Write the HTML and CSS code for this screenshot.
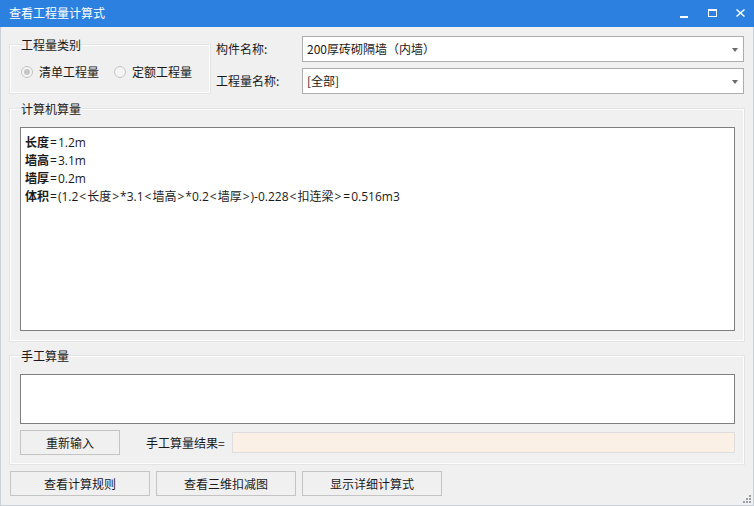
FILE: index.html
```html
<!DOCTYPE html>
<html lang="zh-CN">
<head>
<meta charset="utf-8">
<title>查看工程量计算式</title>
<link rel="stylesheet" href="styles.css">
</head>
<body>
<div class="window">
  <div class="titlebar">
    <span class="title">查看工程量计算式</span>
    <div class="controls">
      <span class="ctl ctl-min"></span>
      <span class="ctl ctl-max"></span>
      <svg class="ctl ctl-close" width="9" height="8" viewBox="0 0 9 8"><path d="M0.5 0.5 L8.5 7.5 M8.5 0.5 L0.5 7.5" stroke="#fff" stroke-width="1.4" fill="none"/></svg>
    </div>
  </div>
  <div class="body">
    <div class="top-row">
      <fieldset class="group group-type">
        <legend>工程量类别</legend>
        <div class="radios">
          <label class="radio"><span class="dot checked"></span>清单工程量</label>
          <label class="radio"><span class="dot"></span>定额工程量</label>
        </div>
      </fieldset>
      <div class="fields">
        <span class="flabel">构件名称:</span>
        <div class="combo"><span>200厚砖砌隔墙（内墙）</span><i class="arrow"></i></div>
        <span class="flabel">工程量名称:</span>
        <div class="combo"><span>[全部]</span><i class="arrow"></i></div>
      </div>
    </div>

    <fieldset class="group group-auto">
      <legend>计算机算量</legend>
      <div class="textbox big">
        <div><b>长度</b><span class="op">=</span>1.2m</div>
        <div><b>墙高</b><span class="op">=</span>3.1m</div>
        <div><b>墙厚</b><span class="op">=</span>0.2m</div>
        <div><b>体积</b><span class="op">=</span>(1.2<span class="op">&lt;</span>长度<span class="op">&gt;</span>*3.1<span class="op">&lt;</span>墙高<span class="op">&gt;</span>*0.2<span class="op">&lt;</span>墙厚<span class="op">&gt;</span>)-0.228<span class="op">&lt;</span>扣连梁<span class="op">&gt;</span><span class="op">=</span>0.516m3</div>
      </div>
    </fieldset>

    <fieldset class="group group-manual">
      <legend>手工算量</legend>
      <div class="textbox small"></div>
      <div class="manual-row">
        <button class="btn btn-reset">重新输入</button>
        <span class="result-label">手工算量结果=</span>
        <div class="result"></div>
      </div>
    </fieldset>

    <div class="bottom-row">
      <button class="btn btn-wide">查看计算规则</button>
      <button class="btn btn-wide">查看三维扣减图</button>
      <button class="btn btn-wide">显示详细计算式</button>
    </div>

    <svg class="grip" width="9" height="9" viewBox="0 0 9 9">
      <rect x="7" y="1" width="2" height="2" fill="#9aa0a8"/>
      <rect x="4" y="4" width="2" height="2" fill="#9aa0a8"/>
      <rect x="7" y="4" width="2" height="2" fill="#9aa0a8"/>
      <rect x="1" y="7" width="2" height="2" fill="#9aa0a8"/>
      <rect x="4" y="7" width="2" height="2" fill="#9aa0a8"/>
      <rect x="7" y="7" width="2" height="2" fill="#9aa0a8"/>
    </svg>
  </div>
</div>
</body>
</html>
```

FILE: styles.css
```css
* { box-sizing: border-box; }
html, body { margin: 0; padding: 0; }
body {
  width: 754px;
  height: 506px;
  overflow: hidden;
  background: #f0f0f0;
  font-family: "Noto Sans CJK SC", "Noto Sans", sans-serif;
  font-size: 12px;
  color: #1a1a1a;
}
.window {
  width: 754px;
  height: 506px;
  display: flex;
  flex-direction: column;
}
.titlebar {
  height: 27px;
  flex: none;
  background: #2b80e0;
  display: flex;
  align-items: center;
  justify-content: space-between;
  padding-left: 9px;
}
.title {
  color: #fff;
  font-size: 12px;
  line-height: 16px;
  margin-top: -1px;
}
.controls {
  display: flex;
  align-items: center;
  height: 100%;
}
.ctl { display: block; }
.ctl-min {
  width: 8px;
  height: 2px;
  background: #fff;
  margin: 7px 20px 0 0;
}
.ctl-max {
  width: 9px;
  height: 8px;
  border: 1px solid #fff;
  border-top-width: 2px;
  margin: 0 19px 2px 0;
}
.ctl-close {
  margin: 0 9px 2px 0;
}
.body {
  flex: 1;
  position: relative;
  border: 1px solid #c9d0d9;
  border-top: none;
  padding: 0 9px;
  display: flex;
  flex-direction: column;
}
.top-row {
  display: flex;
  align-items: flex-start;
  margin-top: 9px;
}
.group {
  margin: 0;
  border: 1px solid #fdfdfd;
  box-shadow: 0 0 0 1px #e4e4e4;
  min-width: 0;
}
.group legend {
  padding: 0 1px;
  line-height: 16px;
  color: #1a1a1a;
}
.group-type {
  width: 200px;
  flex: none;
  margin-top: 1px;
  padding: 11px 4px 12px 9px;
}
.radios {
  display: flex;
  align-items: center;
  height: 16px;
  white-space: nowrap;
}
.radio {
  display: flex;
  align-items: center;
  flex: none;
  line-height: 16px;
  margin-right: 14px;
  color: #1a1a1a;
  white-space: nowrap;
}
.dot {
  flex: none;
  width: 12px;
  height: 12px;
  border-radius: 50%;
  border: 1px solid #c4c4c4;
  background: #f4f4f4;
  margin: 0 6px 0 1px;
  position: relative;
}
.dot.checked::after {
  content: "";
  position: absolute;
  left: 2px;
  top: 2px;
  width: 6px;
  height: 6px;
  border-radius: 50%;
  background: #c6c6c6;
}
.fields {
  flex: 1;
  margin-left: 6px;
  display: grid;
  grid-template-columns: 86px 1fr;
  grid-auto-rows: 26px;
  row-gap: 6px;
  align-items: center;
}
.flabel {
  line-height: 16px;
}
.combo {
  height: 26px;
  border: 1px solid #acacac;
  background: #fff;
  display: flex;
  align-items: center;
  justify-content: space-between;
  padding: 0 5px 0 4px;
  line-height: 16px;
}
.arrow {
  width: 0;
  height: 0;
  border-left: 3px solid transparent;
  border-right: 3px solid transparent;
  border-top: 4px solid #6a6a6a;
  margin-top: 1px;
}
.group-auto {
  margin-top: 7px;
  padding: 10px 8px 9px 9px;
}
.textbox {
  background: #fff;
  border: 1px solid #7f7f7f;
}
.textbox.big {
  height: 204px;
  padding: 5px 4px;
  line-height: 17px;
  font-family: "Open Sans", "Noto Sans CJK SC", sans-serif;
}
.textbox.big b {
  font-weight: 700;
  font-family: "Noto Sans CJK SC", sans-serif;
}
.textbox.big .op {
  padding: 0 1px;
}
.textbox.small {
  height: 50px;
}
.group-manual {
  margin-top: 7px;
  padding: 10px 8px 8px 9px;
}
.manual-row {
  display: flex;
  align-items: center;
  margin-top: 6px;
  height: 25px;
}
.btn {
  font-family: inherit;
  font-size: 12px;
  color: #1a1a1a;
  background: #f0f0f0;
  border: 1px solid #c4c4c4;
  height: 25px;
  padding: 0;
  line-height: 16px;
}
.btn-reset {
  width: 100px;
}
.result-label {
  margin-left: 26px;
  width: 86px;
  line-height: 16px;
}
.result {
  flex: 1;
  height: 21px;
  background: #faf0e6;
  border: 1px solid #dedede;
}
.bottom-row {
  display: flex;
  gap: 6px;
  margin-top: 7px;
}
.btn-wide {
  width: 140px;
}
.grip {
  position: absolute;
  right: 2px;
  bottom: 2px;
}
```
